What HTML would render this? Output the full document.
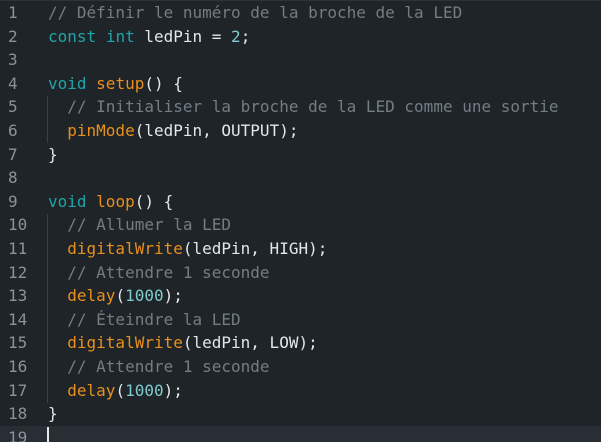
<!DOCTYPE html><html><head><style>
html,body{margin:0;width:601px;height:442px;overflow:hidden}
body{background:#1f2428;font-family:"DejaVu Sans Mono","Liberation Mono",monospace;font-size:16px;position:relative}
.l{position:absolute;left:0;height:24px;line-height:24px;width:601px;white-space:pre;color:#e4e6e8}
.n{position:absolute;left:8px;color:#8d9297}
.c{position:absolute;left:48px}
.cm{color:#737d83}.k{color:#1ea5a9}.f{color:#e8901e}.num{color:#7fcbcd}
.g{position:absolute;left:47px;width:1px;background:#3a4045}
</style></head><body>
<div style="position:absolute;left:0;top:0;width:601px;height:1px;background:#2d3338"></div>
<div style="position:absolute;left:0;top:426px;width:601px;height:16px;background:#282e33"></div>
<div class="g" style="top:96px;height:47px"></div>
<div class="g" style="top:214px;height:189px"></div>
<div style="position:absolute;left:47px;top:427px;width:2px;height:15px;background:#e8e8e8"></div>
<div class="l" style="top:1px"><span class="n">1</span><span class="c"><span class="cm">// Définir le numéro de la broche de la LED</span></span></div>
<div class="l" style="top:24.6px"><span class="n">2</span><span class="c"><span class="k">const</span> <span class="k">int</span> ledPin = <span class="num">2</span>;</span></div>
<div class="l" style="top:48.2px"><span class="n">3</span></div>
<div class="l" style="top:71.8px"><span class="n">4</span><span class="c"><span class="k">void</span> <span class="f">setup</span>() {</span></div>
<div class="l" style="top:95.4px"><span class="n">5</span><span class="c">  <span class="cm">// Initialiser la broche de la LED comme une sortie</span></span></div>
<div class="l" style="top:119px"><span class="n">6</span><span class="c">  <span class="f">pinMode</span>(ledPin, OUTPUT);</span></div>
<div class="l" style="top:142.6px"><span class="n">7</span><span class="c">}</span></div>
<div class="l" style="top:166.2px"><span class="n">8</span></div>
<div class="l" style="top:189.8px"><span class="n">9</span><span class="c"><span class="k">void</span> <span class="f">loop</span>() {</span></div>
<div class="l" style="top:213.4px"><span class="n">10</span><span class="c">  <span class="cm">// Allumer la LED</span></span></div>
<div class="l" style="top:237px"><span class="n">11</span><span class="c">  <span class="f">digitalWrite</span>(ledPin, HIGH);</span></div>
<div class="l" style="top:260.6px"><span class="n">12</span><span class="c">  <span class="cm">// Attendre 1 seconde</span></span></div>
<div class="l" style="top:284.2px"><span class="n">13</span><span class="c">  <span class="f">delay</span>(<span class="num">1000</span>);</span></div>
<div class="l" style="top:307.8px"><span class="n">14</span><span class="c">  <span class="cm">// Éteindre la LED</span></span></div>
<div class="l" style="top:331.4px"><span class="n">15</span><span class="c">  <span class="f">digitalWrite</span>(ledPin, LOW);</span></div>
<div class="l" style="top:355px"><span class="n">16</span><span class="c">  <span class="cm">// Attendre 1 seconde</span></span></div>
<div class="l" style="top:378.6px"><span class="n">17</span><span class="c">  <span class="f">delay</span>(<span class="num">1000</span>);</span></div>
<div class="l" style="top:402.2px"><span class="n">18</span><span class="c">}</span></div>
<div class="l" style="top:425.8px"><span class="n">19</span></div>
</body></html>
